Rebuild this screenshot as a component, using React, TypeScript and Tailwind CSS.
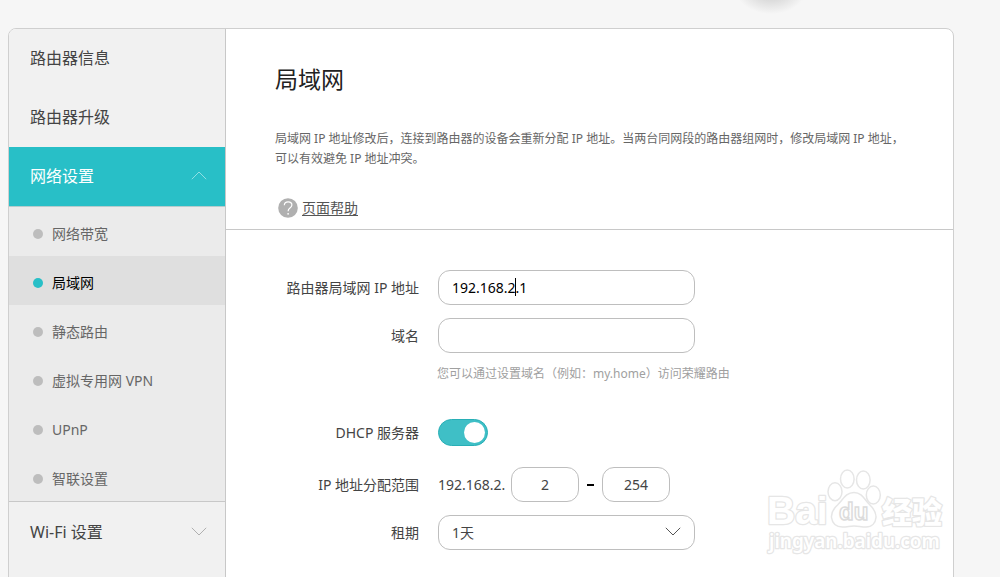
import { useState, type ReactNode } from "react";

const subItems = ["网络带宽", "局域网", "静态路由", "虚拟专用网 VPN", "UPnP", "智联设置"];

const fieldClass =
  "h-[35px] rounded-xl border border-[#bebebe] bg-white text-sm outline-none";

function Chevron({ up = false, className }: { up?: boolean; className: string }) {
  return (
    <svg width="16" height="9" viewBox="0 0 16 9" fill="none" stroke="currentColor" className={className} aria-hidden="true">
      <path d={up ? "M0.8 8.2 8 1l7.2 7.2" : "M0.8 0.8 8 8l7.2-7.2"} />
    </svg>
  );
}

function HelpIcon() {
  return (
    <svg width="20" height="20" viewBox="0 0 20 20" fill="none" aria-hidden="true">
      <circle cx="10" cy="10" r="9.8" fill="#b0b0b0" />
      <path
        d="M6.3 7.2C6.4 5 8 3.8 10.1 3.8c2.2 0 3.8 1.2 3.8 3.1 0 1.5-.9 2.200-2 3.100-1.200.9-1.800 1.600-1.800 3.300"
        stroke="#fff"
        strokeWidth="1.2"
      />
      <circle cx="10.1" cy="15.8" r="0.9" fill="#fff" />
    </svg>
  );
}

function Row({ label, htmlFor, children }: { label: string; htmlFor: string; children: ReactNode }) {
  return (
    <div className="grid grid-cols-[193px_1fr] items-center gap-[19px]">
      <label htmlFor={htmlFor} className="text-right text-sm text-[#444]">
        {label}
      </label>
      <div className="flex items-center">{children}</div>
    </div>
  );
}

function Watermark() {
  return (
    <svg
      width="190"
      height="92"
      viewBox="0 0 190 92"
      className="pointer-events-none absolute right-0 top-[436px]"
      fill="#fff"
      stroke="#e6e6e6"
      strokeWidth="1.5"
      aria-hidden="true"
    >
      <g strokeWidth="2.5" style={{ paintOrder: "stroke" }} strokeLinejoin="round">
        <text x="4" y="59" fontSize="39" fontWeight="700" fontFamily="Liberation Sans, Arial, sans-serif">Bai</text>
        <text x="119" y="58" fontSize="30" fontWeight="900" fontFamily="Noto Sans CJK SC, sans-serif">经验</text>
        <text x="6" y="83" fontSize="19" fontWeight="600" fontFamily="Noto Sans, sans-serif">jingyan.baidu.com</text>
      </g>
      <ellipse cx="72" cy="26.700" rx="7" ry="9" />
      <ellipse cx="84.300" cy="14" rx="6.800" ry="9" />
      <ellipse cx="100.300" cy="15" rx="6.800" ry="9" />
      <ellipse cx="110.300" cy="30" rx="7" ry="9" />
      <path d="M91 27.500c-8 0-11 7-16 12-5 4.500-7 8-6.500 13 .8 6 5 9.500 11 9.500 5 0 7-1 11.500-1s7 1 12 1c6 0 9.500-4 10-9.500.4-5-2-8.500-6.500-13-5-5-7.500-12-15.500-12Z" />
      <text x="76" y="55" fontSize="24" fontWeight="700" fontFamily="Liberation Sans, Arial, sans-serif" stroke="#dcdcdc">du</text>
    </svg>
  );
}

export default function App() {
  const [active, setActive] = useState("局域网");
  const [dhcp, setDhcp] = useState(true);

  return (
    <div className="relative h-screen overflow-hidden bg-[#f6f6f6] pl-2 pr-[46px] pt-7 font-['Noto_Sans','Noto_Sans_CJK_SC',sans-serif] text-[#444]">
      <div className="absolute left-[735px] top-[-38px] h-[52px] w-[72px] bg-[radial-gradient(closest-side,#c4c4c4,#f6f6f6)]" />
      <div className="flex min-h-[600px] overflow-hidden rounded-lg border border-[#cfcfcf] bg-white">
        <nav className="w-[217px] shrink-0 border-r border-[#c8c8c8] bg-[#f1f1f1]">
          <a href="#info" className="flex h-[59px] items-center px-[21px] pb-0.5 text-base">路由器信息</a>
          <a href="#upgrade" className="flex h-[59px] items-center px-[21px] pb-0.5 text-base">路由器升级</a>
          <button className="flex h-[60px] w-full items-center justify-between border-b border-[#b5cccd] bg-[#28bfc7] pb-0.5 pl-[21px] pr-[18px] text-base text-white">
            网络设置
            <Chevron up className="text-[#90dfe3]" />
          </button>
          <ul className="border-b border-[#c8c8c8] bg-[#ebebeb]">
            {subItems.map((item) => (
              <li key={item}>
                <a
                  href="#lan"
                  onClick={() => setActive(item)}
                  className={`flex h-[49px] items-center gap-[9px] pl-6 pt-1 text-sm ${
                    item === active ? "bg-[#dfdfdf] text-black" : "text-[#666]"
                  }`}
                >
                  <span className={`size-[10px] rounded-full ${item === active ? "bg-[#28bfc7]" : "bg-[#bdbdbd]"}`} />
                  {item}
                </a>
              </li>
            ))}
          </ul>
          <button className="flex h-[59px] w-full items-center justify-between pl-[21px] pr-[18px] text-base">
            Wi-Fi 设置
            <Chevron className="text-[#b0b0b0]" />
          </button>
        </nav>

        <main className="relative min-w-0 flex-1">
          <header className="border-b border-[#c8c8c8] pb-[11px] pl-[49px] pr-[38px] pt-8">
            <h1 className="text-[23px] leading-9 text-[#222]">局域网</h1>
            <p className="mt-8 text-xs leading-5 text-[#666]">
              局域网 IP 地址修改后，连接到路由器的设备会重新分配 IP 地址。当两台同网段的路由器组网时，修改局域网 IP 地址，可以有效避免 IP 地址冲突。
            </p>
            <a href="#help" className="ml-[3px] mt-[29px] flex w-fit items-center gap-1 text-sm text-[#555] underline underline-offset-2">
              <HelpIcon />
              页面帮助
            </a>
          </header>

          <form className="pt-10">
            <Row label="路由器局域网 IP 地址" htmlFor="lan-ip">
              <div className="relative">
                <input id="lan-ip" defaultValue="192.168.2.1" className={`${fieldClass} w-[257px] px-[13px] text-black`} />
                <span className="absolute left-[77px] top-2 h-[18px] w-px bg-black" />
              </div>
            </Row>
            <div className="mt-[13px]">
              <Row label="域名" htmlFor="domain">
                <input id="domain" className={`${fieldClass} w-[257px] px-[13px]`} />
              </Row>
            </div>
            <p className="ml-[211px] mt-[11px] text-xs leading-5 text-[#a0a0a0]">
              您可以通过设置域名（例如：my.home）访问荣耀路由
            </p>
            <div className="mt-[35px]">
              <Row label="DHCP 服务器" htmlFor="dhcp">
                <button
                  id="dhcp"
                  type="button"
                  role="switch"
                  aria-checked={dhcp}
                  onClick={() => setDhcp(!dhcp)}
                  className={`flex h-[27px] w-[50px] items-center rounded-full border px-[2px] ${
                    dhcp ? "justify-end border-[#28afb6] bg-[#3fbfc6]" : "justify-start border-[#bebebe] bg-[#ccc]"
                  }`}
                >
                  <span className="size-[21px] rounded-full bg-white" />
                </button>
              </Row>
            </div>
            <div className="mt-[21px]">
              <Row label="IP 地址分配范围" htmlFor="range-start">
                <span className="w-[73px] text-sm">192.168.2.</span>
                <input id="range-start" defaultValue="2" className={`${fieldClass} w-[68px] text-center`} />
                <span className="mx-2 h-[2px] w-[7px] bg-black" />
                <input aria-label="结束地址" defaultValue="254" className={`${fieldClass} w-[68px] text-center`} />
              </Row>
            </div>
            <div className="mt-[13px]">
              <Row label="租期" htmlFor="lease">
                <div className="relative">
                  <select id="lease" className={`${fieldClass} w-[257px] appearance-none px-[13px] text-[#444]`}>
                    <option>1天</option>
                  </select>
                  <Chevron className="pointer-events-none absolute right-[14px] top-3 text-[#555]" />
                </div>
              </Row>
            </div>
          </form>
          <Watermark />
        </main>
      </div>
    </div>
  );
}
